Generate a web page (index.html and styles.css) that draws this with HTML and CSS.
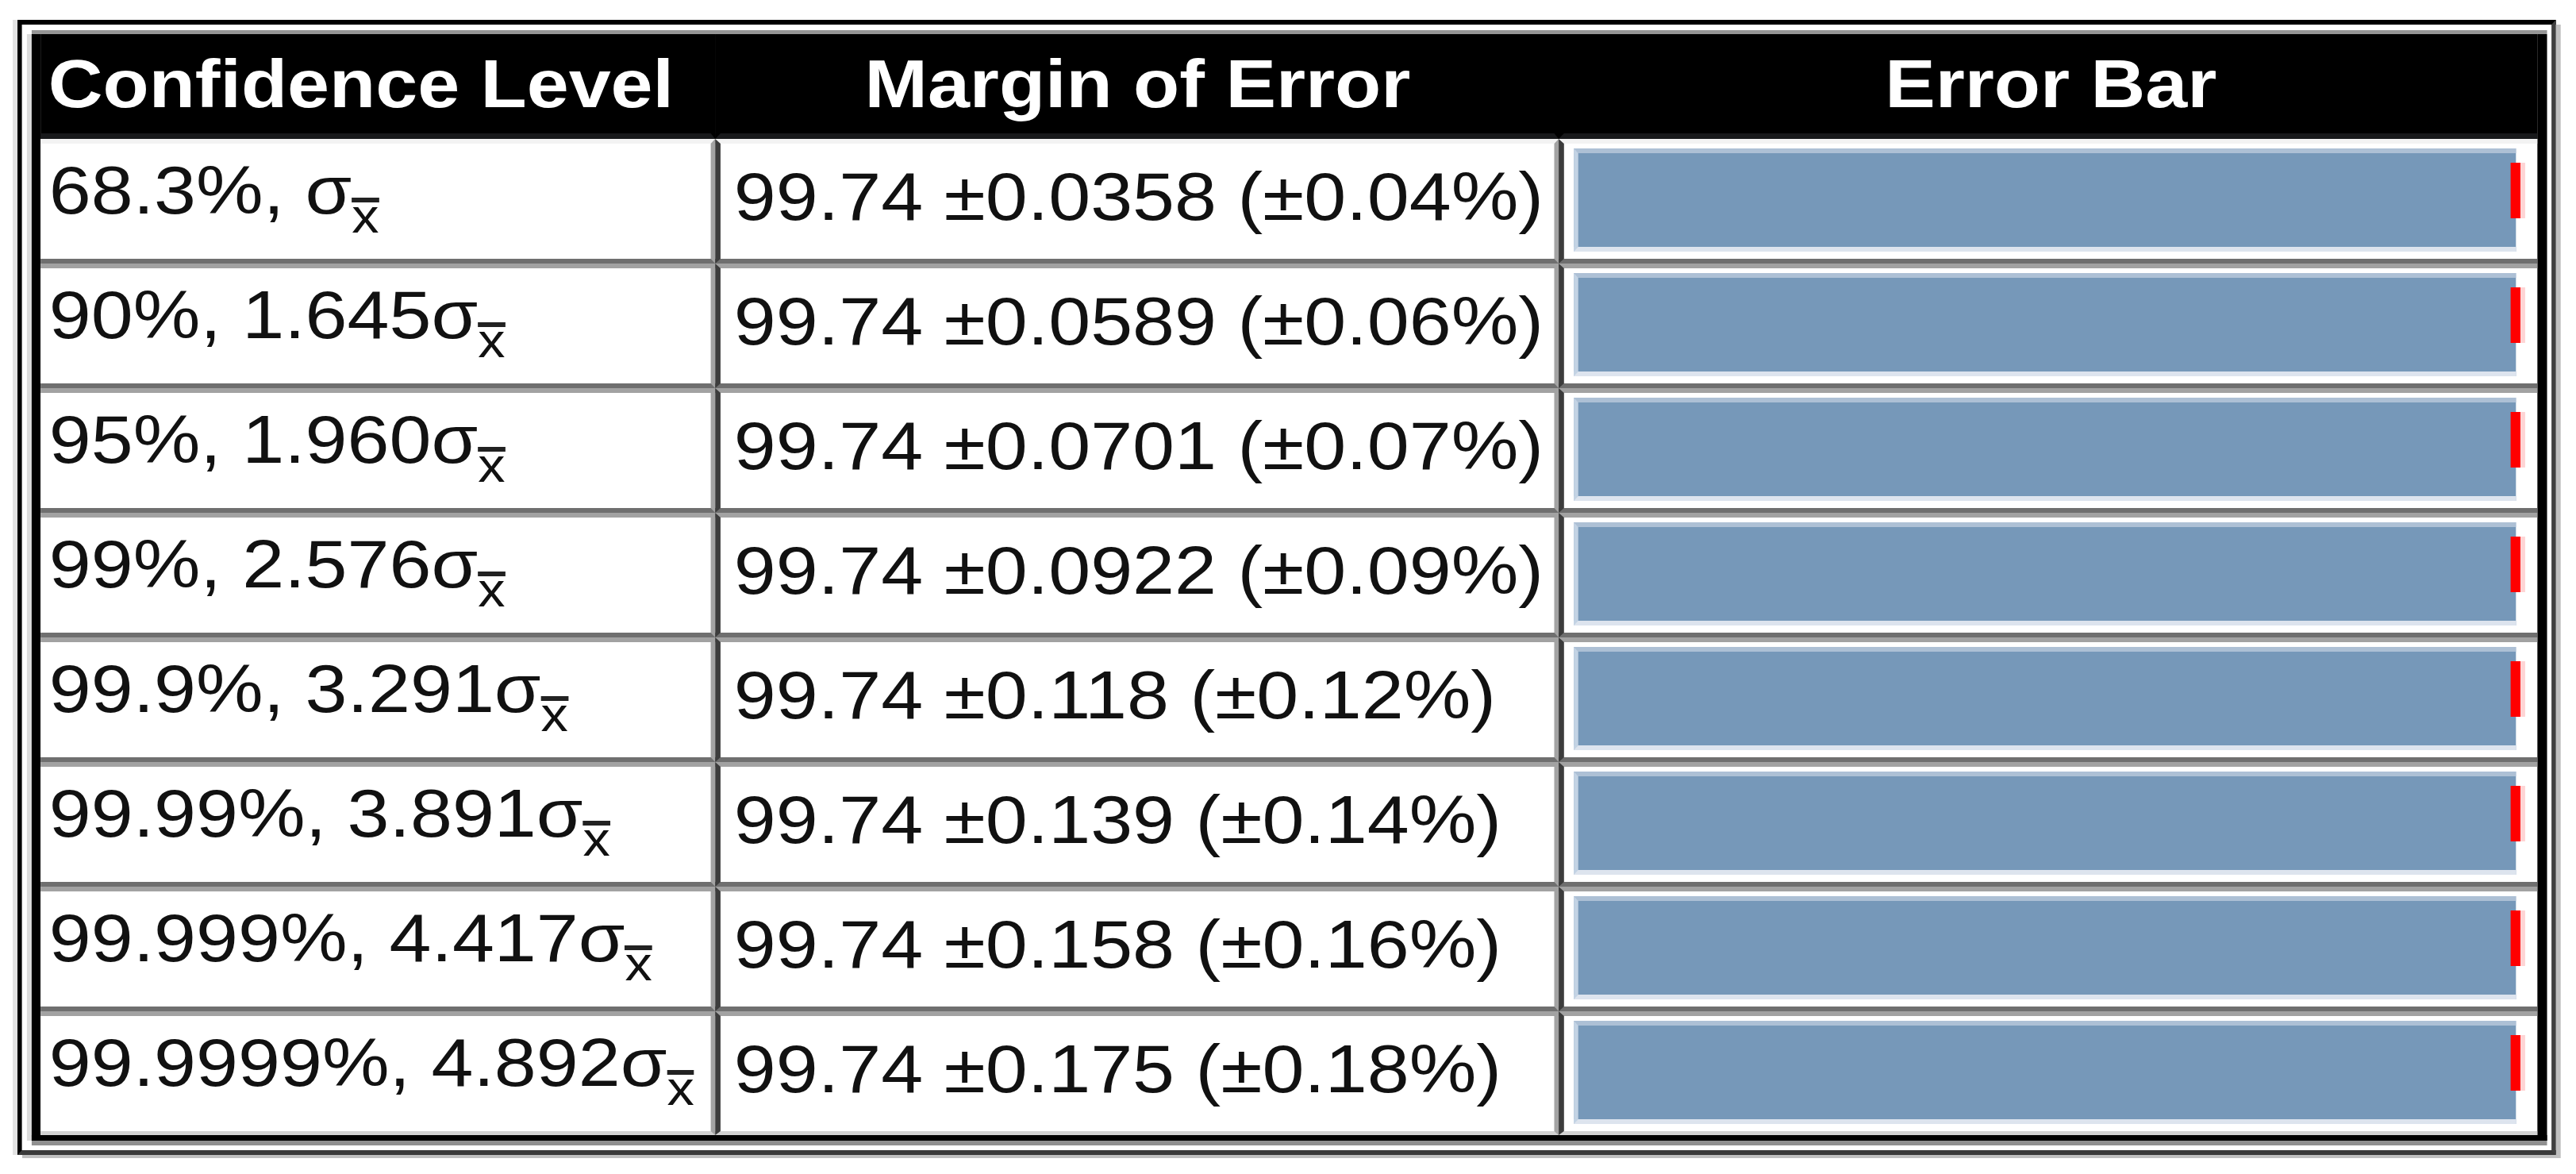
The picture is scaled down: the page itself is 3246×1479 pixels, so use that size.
FILE: index.html
```html
<!DOCTYPE html>
<html lang="en">
<head>
  <meta charset="UTF-8">
  <meta name="viewport" content="width=device-width, initial-scale=1.0">
  <title>Confidence intervals</title>
  <link rel="stylesheet" href="styles.css">
</head>
<body>
  <div class="frame">
    <table class="ci">
      <colgroup>
        <col class="c-lvl">
        <col class="c-moe">
        <col class="c-bar">
      </colgroup>
      <thead>
        <tr>
          <th class="lvl">Confidence Level</th>
          <th>Margin of Error</th>
          <th>Error Bar</th>
        </tr>
      </thead>
      <tbody>
        <tr>
          <td class="lvl">68.3%, σ<span class="sub">x</span></td>
          <td class="moe">99.74 ±0.0358 (±0.04%)</td>
          <td class="eb"><div class="bar"><span class="err"></span></div></td>
        </tr>
        <tr>
          <td class="lvl">90%, 1.645σ<span class="sub">x</span></td>
          <td class="moe">99.74 ±0.0589 (±0.06%)</td>
          <td class="eb"><div class="bar"><span class="err"></span></div></td>
        </tr>
        <tr>
          <td class="lvl">95%, 1.960σ<span class="sub">x</span></td>
          <td class="moe">99.74 ±0.0701 (±0.07%)</td>
          <td class="eb"><div class="bar"><span class="err"></span></div></td>
        </tr>
        <tr>
          <td class="lvl">99%, 2.576σ<span class="sub">x</span></td>
          <td class="moe">99.74 ±0.0922 (±0.09%)</td>
          <td class="eb"><div class="bar"><span class="err"></span></div></td>
        </tr>
        <tr>
          <td class="lvl">99.9%, 3.291σ<span class="sub">x</span></td>
          <td class="moe">99.74 ±0.118 (±0.12%)</td>
          <td class="eb"><div class="bar"><span class="err"></span></div></td>
        </tr>
        <tr>
          <td class="lvl">99.99%, 3.891σ<span class="sub">x</span></td>
          <td class="moe">99.74 ±0.139 (±0.14%)</td>
          <td class="eb"><div class="bar"><span class="err"></span></div></td>
        </tr>
        <tr>
          <td class="lvl">99.999%, 4.417σ<span class="sub">x</span></td>
          <td class="moe">99.74 ±0.158 (±0.16%)</td>
          <td class="eb"><div class="bar"><span class="err"></span></div></td>
        </tr>
        <tr>
          <td class="lvl">99.9999%, 4.892σ<span class="sub">x</span></td>
          <td class="moe">99.74 ±0.175 (±0.18%)</td>
          <td class="eb"><div class="bar"><span class="err"></span></div></td>
        </tr>
      </tbody>
    </table>
  </div>
</body>
</html>
```

FILE: styles.css
```css
body {
    margin: 0;
    background: #fff;
    font-family: "Liberation Sans", Arial, sans-serif;
}

/* the source picture is a bit wider than tall, so the whole frame is stretched */
.frame {
    display: inline-block;
    margin: 25px 0 0 22px;
    padding: 12px 5.36px 12px 10.71px;
    border-style: solid;
    border-width: 6px 5.36px;
    border-color: #000 #404040 #3a3a3a #000;
    box-shadow: 5.36px 6px 0 #c0c0c0, -5.36px 0 0 #e2e2e2;
    transform: scaleX(1.12);
    transform-origin: 0 0;
}

.ci {
    width: 2830.3px;
    table-layout: fixed;
    border-collapse: separate;
    border-spacing: 0;
    border-style: solid;
    border-color: #000;
    border-width: 0 11.61px 7px 10.71px;
    box-shadow: 0 -5px 0 #959595, -5.36px 0 0 #dcdcdc, 0 6px 0 #909090;
    font-size: 85px;
    color: #111;
}

.c-lvl { width: 758.9px; }
.c-moe { width: 949.1px; }
.c-bar { width: 1100px; }

th, td {
    padding: 0;
    white-space: nowrap;
}

th {
    height: 125px;
    background: #000;
    color: #fff;
    font-weight: bold;
    vertical-align: middle;
    border-bottom: 7px solid #18191b;
}
th.lvl {
    text-align: left;
    padding-left: 8.9px;
}

td {
    height: 145px;
    background: #fff;
    vertical-align: middle;
    border-top: 6px solid #a2a2a2;
    border-bottom: 6px solid #6f6f6f;
}
tbody tr:first-child td {
    border-top-color: #f3f3f3;
}
tbody tr:last-child td {
    border-bottom: 5px solid #d2d2d2;
}

/* column dividers: light on the left side, dark on the right */
th:nth-child(1), td:nth-child(1) {
    border-right: 5.36px solid #a3a3a3;
}
th:nth-child(2), td:nth-child(2) {
    border-left: 6.25px solid #3c3c3c;
    border-right: 5.36px solid #a3a3a3;
}
th:nth-child(3), td:nth-child(3) {
    border-left: 6.25px solid #3c3c3c;
}
th:nth-child(n) {
    border-left-color: #000;
    border-right-color: #000;
}

td.lvl {
    height: 119px;
    padding: 0 0 26px 9.8px;
}
td.moe {
    height: 133px;
    padding: 0 0 12px 15.2px;
}

/* x-bar subscript: the bar is the top border of a tight inline box */
.sub {
    display: inline-block;
    font-size: 0.72em;
    line-height: 0.58em;
    vertical-align: -24px;
    border-top: 6px solid #222;
}

td.eb {
    vertical-align: top;
    padding: 0 24.1px 0 10.71px;
}

.bar {
    position: relative;
    box-sizing: border-box;
    height: 130px;
    margin-top: 6px;
    background: #7698b9;
    border-top: 6px solid #adc0d5;
    border-bottom: 6px solid #dde4ee;
    border-left: 5.36px solid #c3d3e4;
}

.err {
    position: absolute;
    top: 12px;
    right: -5.36px;
    width: 11.6px;
    height: 70px;
    background: #f00;
    box-shadow: 5.36px 0 0 #ffd4d4;
}
```
